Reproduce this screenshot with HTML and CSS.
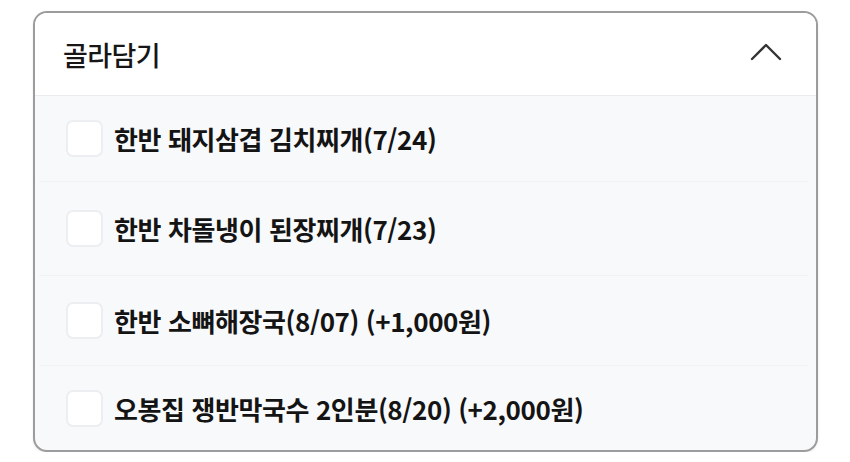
FILE: index.html
```html
<!DOCTYPE html>
<html lang="ko">
<head>
<meta charset="utf-8">
<title>골라담기</title>
<link rel="stylesheet" href="styles.css">
</head>
<body>
<section class="picker">
  <header class="picker-head">
    <h2 class="picker-title">골라담기</h2>
    <svg class="chevron" width="32" height="20" viewBox="0 0 32 20" aria-hidden="true">
      <path d="M2 17 L16 3 L30 17" fill="none" stroke="#333" stroke-width="2.4" stroke-linecap="round" stroke-linejoin="round"/>
    </svg>
  </header>
  <ul class="picker-list">
    <li class="option row-a"><span class="box"></span><span class="label">한반 돼지삼겹 김치찌개(7/24)</span></li>
    <li class="option row-b"><span class="box"></span><span class="label">한반 차돌냉이 된장찌개(7/23)</span></li>
    <li class="option row-c"><span class="box"></span><span class="label">한반 소뼈해장국(8/07) (+1,000원)</span></li>
    <li class="option row-d"><span class="box"></span><span class="label">오봉집 쟁반막국수 2인분(8/20) (+2,000원)</span></li>
  </ul>
</section>
</body>
</html>
```

FILE: styles.css
```css
* { box-sizing: border-box; }

body {
  margin: 0;
  background: #ffffff;
  font-family: "Noto Sans CJK KR", "Noto Sans", sans-serif;
  color: #141414;
}

.picker {
  margin: 11px 0 0 33px;
  width: 785px;
  height: 441px;
  border: 2px solid #9c9c9c;
  border-radius: 14px;
  overflow: hidden;
  background: #f8f9fb;
  display: flex;
  flex-direction: column;
  box-shadow: 0 1px 3px rgba(0, 0, 0, 0.08);
}

.picker-head {
  height: 83px;
  flex: none;
  background: #ffffff;
  border-bottom: 1px solid #e9ebef;
  display: flex;
  align-items: center;
  justify-content: space-between;
  padding: 0 34px 0 28px;
}

.picker-title {
  margin: 0;
  font-size: 27px;
  font-weight: 500;
  letter-spacing: -0.6px;
  color: #161616;
}

.chevron { display: block; margin-top: -4px; }

.picker-list {
  list-style: none;
  margin: 0;
  padding: 0 8px 0 4px;
  flex: 1;
  display: flex;
  flex-direction: column;
}

.option {
  display: flex;
  align-items: center;
  gap: 11px;
  padding-left: 27px;
  border-bottom: 1px solid #f1f2f5;
}
.option:last-child { border-bottom: none; }

.row-a { height: 86px; }
.row-b { height: 94px; }
.row-c { height: 90px; }
.row-d { flex: 1; }

.box {
  width: 37px;
  height: 37px;
  flex: none;
  background: #ffffff;
  border: 2px solid #eceef1;
  border-radius: 7px;
}

.label {
  font-size: 26px;
  font-weight: 600;
  letter-spacing: -0.4px;
  color: #141414;
}
```
